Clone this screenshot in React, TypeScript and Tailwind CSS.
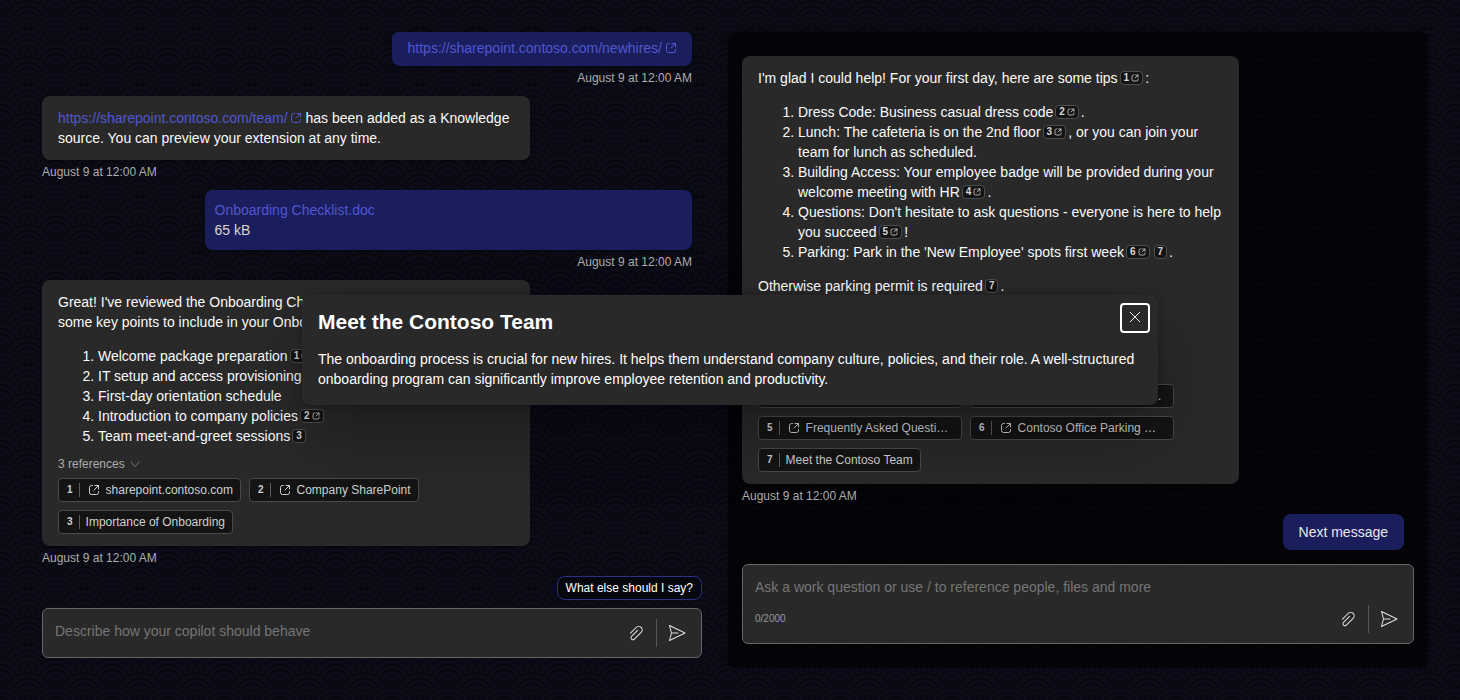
import React, { useState } from "react";

function OpenIcon({ size = 12, className = "" }: { size?: number; className?: string }) {
  return (
    <svg
      width={size}
      height={size}
      viewBox="0 0 12 12"
      fill="none"
      stroke="currentColor"
      strokeWidth={size < 12 ? 1.2 : 1}
      strokeLinecap="round"
      strokeLinejoin="round"
      className={`shrink-0 ${className}`}
      aria-hidden="true"
    >
      <path d="M4.500 1.500h-1a2 2 0 0 0-2 2v5a2 2 0 0 0 2 2h5a2 2 0 0 0 2-2v-1M7 1.500h3.500V5M10.500 1.500 6 6" />
    </svg>
  );
}

function AttachIcon() {
  return (
    <svg width="20" height="20" viewBox="0 0 20 20" fill="currentColor" aria-hidden="true">
      <path d="m4.830 10.480 5.650-5.650a3 3 0 0 1 4.250 4.240L8 15.800a1.500 1.500 0 0 1-2.120-2.120l6-6.010a.5.5 0 1 0-.700-.710l-6 6.010a2.500 2.500 0 0 0 3.530 3.540l6.710-6.720a4 4 0 1 0-5.650-5.660L4.120 9.780a.5.5 0 0 0 .710.700Z" />
    </svg>
  );
}

function SendIcon() {
  return (
    <svg width="20" height="20" viewBox="0 0 20 20" fill="currentColor" aria-hidden="true">
      <path d="M2.720 2.050a.5.5 0 0 0-.700.570l1.990 7.380-1.990 7.380a.5.5 0 0 0 .700.570l15.500-7.500a.5.5 0 0 0 0-.900l-15.500-7.500Zm2.140 7.450L3.240 3.420 16.850 10 3.240 16.580 4.860 10.500H11a.5.5 0 0 0 0-1H4.860Z" />
    </svg>
  );
}

function Cite({ n, link = false }: { n: number; link?: boolean }) {
  return (
    <button
      type="button"
      className="mx-0.5 inline-flex h-[14px] items-center gap-0.5 rounded border border-[#4d4d4d] bg-[#141414] px-[3px] align-[2px] text-[10px] leading-[12px] font-bold text-[#d6d6d6]"
    >
      {n}
      {link && <OpenIcon size={8} />}
    </button>
  );
}

function Reference({ n, link = true, children }: { n: number; link?: boolean; children: React.ReactNode }) {
  return (
    <a
      href="#reference"
      className="flex h-6 max-w-[204px] items-center rounded border border-[#4a4a4a] bg-[#141414] pr-[7px] pl-2 text-xs text-[#d0d0d0]"
    >
      <span className="text-[10px] font-bold">{n}</span>
      <span className="mx-1.5 h-3.5 w-px shrink-0 bg-[#5c5c5c]" />
      {link && <OpenIcon className="mr-1.5 ml-0.5" />}
      <span className="truncate">{children}</span>
    </a>
  );
}

function ReferencesToggle({ count, className }: { count: number; className: string }) {
  return (
    <button type="button" className={`flex items-center gap-1 text-xs text-[#adadad] ${className}`}>
      {count} references
      <svg width="12" height="12" viewBox="0 0 12 12" fill="none" stroke="#777" aria-hidden="true">
        <path d="m1.500 3.500 4.500 5 4.500-5" />
      </svg>
    </button>
  );
}

function Stamp({ right = false }: { right?: boolean }) {
  return <p className={`mt-1 text-xs leading-4 text-[#adadad] ${right ? "text-right" : ""}`}>August 9 at 12:00 AM</p>;
}

const card = "rounded-lg bg-[#292929] px-4 text-[#fafafa] shadow-[0_1px_2px_rgba(0,0,0,0.28)]";
const link = "text-[#5157d0]";

function Tools() {
  return (
    <div className="flex items-center text-[#e4e4e4]">
      <button type="button" aria-label="Attach file" className="flex h-8 w-8 items-center justify-center">
        <AttachIcon />
      </button>
      <span className="mx-1 h-7 w-px bg-[#555]" />
      <button type="button" aria-label="Send" className="flex h-8 w-8 items-center justify-center">
        <SendIcon />
      </button>
    </div>
  );
}

const centres = [[28, 0], [0, 14], [56, 14], [28, 28], [0, 42], [56, 42], [28, 56]];
const radii = [25, 19, 14, 8, 3];

function Backdrop() {
  return (
    <svg className="absolute inset-0 h-full w-full" aria-hidden="true">
      <defs>
        <pattern id="waves" y="-2" width="56" height="28" patternUnits="userSpaceOnUse">
          {centres.map(([x, y]) => (
            <g key={`${x}-${y}`} fill="#0b0c18" stroke="#07080f" strokeWidth="2">
              {radii.map((r) => (
                <circle key={r} cx={x} cy={y} r={r} />
              ))}
            </g>
          ))}
        </pattern>
      </defs>
      <rect width="100%" height="100%" fill="url(#waves)" />
    </svg>
  );
}

export default function App() {
  const [open, setOpen] = useState(true);
  return (
    <div className="relative min-h-screen overflow-hidden bg-[#0a0a15] font-['Liberation_Sans',Arial,sans-serif] text-sm leading-5">
      <Backdrop />
      <main className="relative grid min-h-screen grid-cols-[67fr_70fr] gap-[26px] p-8">
        <section className="flex min-w-0 flex-col pb-2.5 pl-2.5">
          <div className="flex flex-1 flex-col pr-2.5">
            <div className="self-end rounded-t-md rounded-b-lg bg-[#1a1e5c] pt-1.5 pr-[15px] pb-2 pl-4 shadow-[0_1px_2px_rgba(0,0,0,0.28)]">
              <a href="#newhires" className={`${link} flex items-center gap-[3px]`}>
                https://sharepoint.contoso.com/newhires/
                <OpenIcon />
              </a>
            </div>
            <Stamp right />
            <div className={`${card} mt-2.5 w-3/4 py-3`}>
              <a href="#team" className={link}>
                https://sharepoint.contoso.com/team/
                <OpenIcon className="ml-0.5 inline align-[-1px]" />
              </a>{" "}
              has been added as a Knowledge source. You can preview your extension at any time.
            </div>
            <Stamp />
            <div className="mt-2.5 w-3/4 self-end rounded-lg bg-[#1a1e5c] p-2.5 text-[#d6d6d6] shadow-[0_1px_2px_rgba(0,0,0,0.28)]">
              <a href="#checklist" className={link}>Onboarding Checklist.doc</a>
              <p>65 kB</p>
            </div>
            <Stamp right />
            <div className={`${card} mt-2.5 w-3/4 py-3`}>
              <p>Great! I've reviewed the Onboarding Checklist document now. Here are some key points to include in your Onboarding copilot:</p>
              <ol className="mt-3.5 list-decimal pl-10">
                <li>Welcome package preparation<Cite n={1} link /></li>
                <li>IT setup and access provisioning</li>
                <li>First-day orientation schedule</li>
                <li>Introduction to company policies<Cite n={2} link /></li>
                <li>Team meet-and-greet sessions<Cite n={3} /></li>
              </ol>
              <ReferencesToggle count={3} className="mt-2.5" />
              <div className="mt-1.5 flex flex-wrap gap-2">
                <Reference n={1}>sharepoint.contoso.com</Reference>
                <Reference n={2}>Company SharePoint</Reference>
                <Reference n={3} link={false}>Importance of Onboarding</Reference>
              </div>
            </div>
            <Stamp />
          </div>
          <button type="button" className="mb-2 h-6 self-end rounded-lg border border-[#2b2f86] bg-[#06060e] px-2 text-xs text-white">
            What else should I say?
          </button>
          <div className="flex items-center rounded-md border border-[#666] bg-[#292929] py-2 pr-2 pl-3">
            <input
              aria-label="Describe how your copilot should behave"
              placeholder="Describe how your copilot should behave"
              className="h-8 min-w-0 flex-1 bg-transparent pb-1 outline-none placeholder:text-[#757575]"
            />
            <Tools />
          </div>
        </section>

        <section className="flex min-w-0 flex-col rounded-lg bg-black/60 px-3.5 py-6 shadow-[0_0_2px_rgba(0,0,0,0.5)]">
          <div className="flex flex-1 flex-col pr-2.5">
            <div className={`${card} w-3/4 py-3`}>
              <p>I'm glad I could help! For your first day, here are some tips<Cite n={1} link />:</p>
              <ol className="mt-3.5 list-decimal pl-10">
                <li>Dress Code: Business casual dress code<Cite n={2} link />.</li>
                <li>Lunch: The cafeteria is on the 2nd floor<Cite n={3} link />, or you can join your team for lunch as scheduled.</li>
                <li>Building Access: Your employee badge will be provided during your welcome meeting with HR<Cite n={4} link />.</li>
                <li>Questions: Don't hesitate to ask questions - everyone is here to help you succeed<Cite n={5} link />!</li>
                <li>Parking: Park in the 'New Employee' spots first week<Cite n={6} link /><Cite n={7} />.</li>
              </ol>
              <p className="mt-3.5">Otherwise parking permit is required<Cite n={7} />.</p>
              <ReferencesToggle count={7} className="mt-[34px]" />
              <div className="mt-1.5 flex flex-wrap gap-2">
                <Reference n={1}>First Day Guide for Everyone</Reference>
                <Reference n={2}>Dress Code Policy</Reference>
                <Reference n={3}>Cafeteria and Lunch Options</Reference>
                <Reference n={4}>Building Access Policies and Rules</Reference>
                <Reference n={5}>Frequently Asked Questions</Reference>
                <Reference n={6}>Contoso Office Parking Map</Reference>
                <Reference n={7} link={false}>Meet the Contoso Team</Reference>
              </div>
            </div>
            <Stamp />
            <p className="mt-2.5 self-end rounded-lg bg-[#1a1e5c] px-4 py-2 text-[#e8e8f0] shadow-[0_1px_2px_rgba(0,0,0,0.28)]">Next message</p>
          </div>
          <div className="mt-3.5 rounded-md border border-[#666] bg-[#292929] pt-3 pr-2 pb-2 pl-3">
            <input
              aria-label="Ask a work question"
              placeholder="Ask a work question or use / to reference people, files and more"
              className="block h-5 w-full bg-transparent outline-none placeholder:text-[#757575]"
            />
            <div className="mt-1.5 flex items-center justify-between">
              <span className="text-[10px] text-[#999]">0/2000</span>
              <Tools />
            </div>
          </div>
        </section>
      </main>

      {open && (
        <div
          role="dialog"
          aria-labelledby="dialog-title"
          className="absolute top-1/2 left-1/2 w-[856px] max-w-full -translate-x-1/2 -translate-y-1/2 rounded-lg bg-[#292929] px-4 pt-2 pb-4 text-white shadow-[0_0_8px_rgba(0,0,0,0.24),0_32px_64px_rgba(0,0,0,0.28)]"
        >
          <div className="flex items-start justify-between">
            <h2 id="dialog-title" className="pt-[5px] text-[21px] leading-7 font-bold">Meet the Contoso Team</h2>
            <button
              type="button"
              aria-label="Close"
              onClick={() => setOpen(false)}
              className="-mr-2 flex h-[30px] w-[30px] items-center justify-center rounded border-2 border-white pb-0.5"
            >
              <svg width="12" height="12" viewBox="0 0 12 12" stroke="#eee" aria-hidden="true">
                <path d="m1 1 10 10M11 1 1 11" />
              </svg>
            </button>
          </div>
          <p className="mt-[13px]">
            The onboarding process is crucial for new hires. It helps them understand company culture, policies, and their role. A well-structured onboarding program can significantly improve employee retention and productivity.
          </p>
        </div>
      )}
    </div>
  );
}
